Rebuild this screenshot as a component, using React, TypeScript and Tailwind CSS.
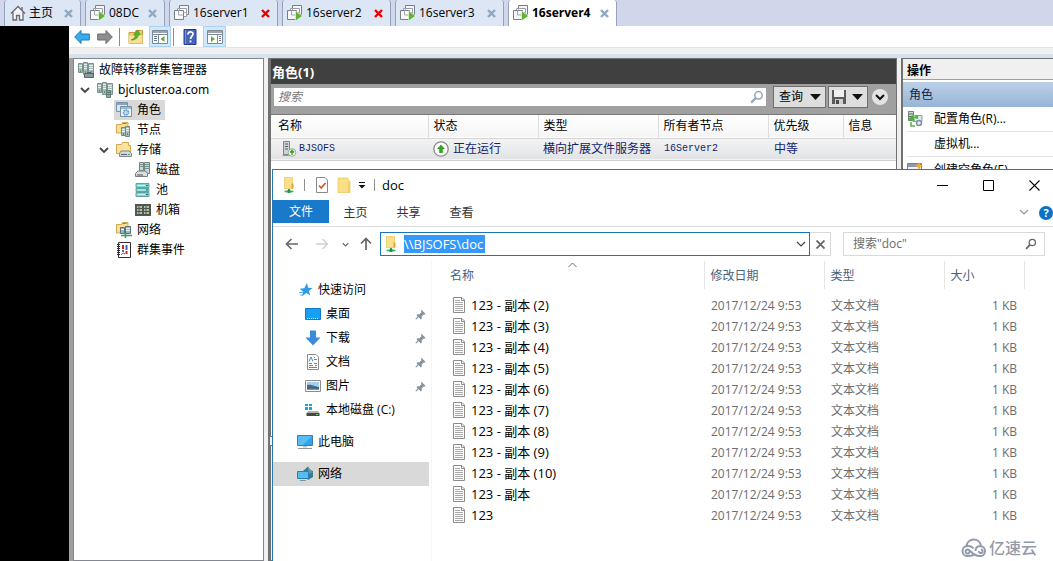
import type { ReactNode } from "react";
import { clsx } from "clsx";

type IconProps = { className?: string };

function Svg({ className = "size-4", children, box = 16 }: IconProps & { children: ReactNode; box?: number }) {
  return (
    <svg className={clsx("shrink-0", className)} viewBox={`0 0 ${box} ${box}`} fill="none" aria-hidden="true">
      {children}
    </svg>
  );
}

function HomeIcon() {
  return (
    <Svg>
      <path d="M1 8.500 8 1.500l7 7M3 7.500V15h3.500v-4.500h3V15H13V7.500" fill="#f8f8f8" stroke="#66686c" strokeWidth="1.300" />
      <path d="M12 2v3" stroke="#66686c" strokeWidth="1.300" />
    </Svg>
  );
}

function VmIcon({ running }: { running: boolean }) {
  return (
    <Svg>
      <path d="M5.500.500h9v9h-9z" fill="#f4f6fa" stroke="#7a7d84" />
      <path d="M3.500 3.500h9v8h-9z" fill="#fff" stroke="#9a9da4" />
      <path d="M.500 5.500h9v9h-9z" fill="#f7f9fc" stroke="#7a7d84" />
      <path d="M4.500 5.500v4.500h5M5.500 3.500v2M12.500 7.500h-3" stroke="#a6a9b0" />
      {running && <path d="M8.500 6v10l7-5z" fill="#5cb52f" stroke="#f4fff0" strokeWidth=".6" />}
    </Svg>
  );
}

function CloseIcon({ danger, className = "size-[9px]" }: { danger?: boolean; className?: string }) {
  return (
    <Svg className={className} box={9}>
      <path d="m1 1 7 7M8 1 1 8" stroke={danger ? "#e80000" : "#8fa7c1"} strokeWidth="2.400" />
    </Svg>
  );
}

function BigArrow({ back }: { back?: boolean }) {
  return (
    <Svg>
      {back ? (
        <path d="M.700 8 7 1.500v3.500h8.300v6H7v3.500z" fill="#3aaceb" stroke="#1679b8" />
      ) : (
        <path d="M15.300 8 9 1.500v3.500H.700v6H9v3.500z" fill="#8e8e8e" stroke="#6a6a6a" />
      )}
    </Svg>
  );
}

function FolderUpIcon() {
  return (
    <Svg>
      <path d="M1 3.500h6l1-2h6.500v13H1z" fill="#f0cd6b" stroke="#c59d3f" />
      <path d="M1 6.500h13.500v8H1z" fill="#f8df93" />
      <path d="M3 11c3-1 4-3 4.500-5L5.500 6 9.500 1l3 4.500-2 .300C10 9 7 11.500 3 11z" fill="#53b52c" stroke="#3b8a22" strokeWidth=".5" />
    </Svg>
  );
}

function PaneIcon({ right }: { right?: boolean }) {
  return (
    <Svg>
      <path d="M.500 1.500h15v13H.500z" fill="#fff" stroke="#7e8894" />
      <path d="M1 2h14v2H1z" fill="#9aa5b0" />
      <path d="M1 5.500h14" stroke="#7e8894" />
      <path d={right ? "M10.500 6v8" : "M6.500 6v8"} stroke="#7e8894" />
      <path d={right ? "M12 7.500h2M12 9.500h2M12 11.500h2" : "M2 7.500h3M2 9.500h3M2 11.500h3"} stroke="#597995" />
      <path d={right ? "M4 7v6l4-3z" : "M12.500 7v6l-4-3z"} fill="#5cac3e" />
    </Svg>
  );
}

function HelpBookIcon() {
  return (
    <Svg>
      <path d="M2 .500h12v15H2z" fill="#4565bc" stroke="#273f8b" />
      <path d="M3.500 1v14" stroke="#7b94dc" />
      <path d="M6 5.500C6 2 11 2 11 5c0 2-2.500 2.300-2.500 5" stroke="#fff" strokeWidth="1.700" />
      <path d="M7.600 11.500h1.800v1.800H7.600z" fill="#fff" />
    </Svg>
  );
}

function ClusterIcon({ manager }: { manager?: boolean }) {
  return (
    <Svg>
      <path d="M.500 1.500h4v9h-4zM5.500.500h4v12h-4zM10.500 1.500h5v11h-5z" fill="#a7bcb7" stroke="#7c9193" />
      <path d="M1 3.500h3M1 5.500h3M6 2.500h3M6 4.500h3M6 6.500h3M11 3.500h4M11 5.500h4M11 7.500h4" stroke="#e6f0ee" />
      <path d="M2.500 8v2M7.500 9v2M13.500 9v2" stroke="#56a24b" />
      {manager ? (
        <path d="M6.500 11.500h9v4h-9zM9 10.500h4" fill="#8b9ba3" stroke="#56646d" />
      ) : (
        <path d="M9.500 8.500h4v7h-4zM10 10.500h3M10 12.500h3" fill="#8fa9a4" stroke="#627d75" />
      )}
    </Svg>
  );
}

function RolesIcon() {
  return (
    <Svg>
      <path d="M.500.500h11v9H.500z" fill="#dae7f2" stroke="#7890a8" />
      <path d="M1 1h10v2H1z" fill="#8aa6c2" />
      <path d="M4.500 4.500h11v10h-11z" fill="#edf4fa" stroke="#7890a8" />
      <path d="M5 5h10v2H5z" fill="#9db8d1" />
      <circle cx="10" cy="10.500" r="2.500" fill="#bfd9ef" stroke="#5b91c2" strokeWidth="1.500" strokeDasharray="1.500 .7" />
    </Svg>
  );
}

function FolderWith({ children }: { children: ReactNode }) {
  return (
    <Svg>
      <path d="M.500 2.500h5l1-2h5.500v10.500H.500z" fill="#f9df91" stroke="#cfa951" />
      <path d="M6.500 1.500h4" stroke="#bb7634" />
      {children}
    </Svg>
  );
}

function NodesIcon() {
  return (
    <FolderWith>
      <path d="M5.500 5.500h4v8h-4zM9.500 4.500h4v10h-4z" fill="#a8bdb8" stroke="#728789" />
      <path d="M6 7.500h3M6 9.500h3M10 6.500h3M10 8.500h3" stroke="#edf5f3" />
      <path d="M7.500 11v2M11.500 11v2" stroke="#4d9d43" />
    </FolderWith>
  );
}

function StorageIcon() {
  return (
    <Svg>
      <path d="M.500 2.500h5l1-2h6v3h2v8H.500z" fill="#fae29a" stroke="#cfa951" />
      <path d="M5 9h8l2.500 2.500v3H3.500v-3z" fill="#d4d8da" stroke="#7f888e" />
      <path d="M5 12.500h6" stroke="#59636a" />
      <path d="M12 12.500h2" stroke="#4eb044" />
    </Svg>
  );
}

function DiskIcon() {
  return (
    <Svg>
      <path d="M4.500.500h4v8h-4zM9.500.500h5v11h-5z" fill="#c8d8d5" stroke="#748683" />
      <path d="M5 2.500h3M5 4.500h3M10 2.500h4M10 4.500h4M10 6.500h4" stroke="#74918b" />
      <path d="m3 9-2.500 2.500v3h12v-3L10.500 9z" fill="#dadddf" stroke="#787e83" />
      <path d="M2 13h6" stroke="#484e52" />
    </Svg>
  );
}

function PoolIcon() {
  return (
    <Svg>
      <path d="M1 1.500h13v4H1zM1 6.500h13v3H1zM1 10.500h13v4H1z" fill="#7fd3cf" stroke="#5fa5a8" />
      <path d="M2.500 3.500h8M2.500 8h8M2.500 12.500h8" stroke="#d1f4f0" />
      <path d="M11 3.500h2M11 8h2M11 12.500h2" stroke="#286e77" />
    </Svg>
  );
}

function ChassisIcon() {
  return (
    <Svg>
      <path d="M0 2h16v12H0z" fill="#4f584e" />
      <path d="M2 4h5v2H2zM9 4h5v2H9zM2 7h5v2H2zM9 7h5v2H9zM2 10h5v2H2zM9 10h5v2H9z" fill="#b4bba8" />
      <path d="M4 3v10M11 3v10" stroke="#4f584e" />
    </Svg>
  );
}

function NetworksIcon() {
  return (
    <FolderWith>
      <path d="M4.500 5.500h4v6h-4zM9.500 4.500h5v7h-5z" fill="#9cb5bd" stroke="#587481" />
      <path d="M5 7.500h3M10 6.500h4M10 8.500h4" stroke="#edf5f3" />
      <path d="M5 13.500h11M9.500 11v5" stroke="#20a56a" strokeWidth="1.500" />
    </FolderWith>
  );
}

function EventsIcon() {
  return (
    <Svg>
      <path d="M2.500.500h12v15h-12z" fill="#fff" stroke="#303030" />
      <path d="M1 2.500h3M1 4.500h3M1 6.500h3M1 8.500h3M1 10.500h3M1 12.500h3" stroke="#303030" />
      <path d="M6 3h2v4H6zM9.500 9h2v3h-2z" fill="#d8261f" />
      <path d="M9.500 3h2v5h-2zM6 8h2v2H6z" fill="#4a61c1" />
      <path d="M5 13l2-2 2 1" stroke="#9a46a0" />
    </Svg>
  );
}

function Chevron({ className, color = "#444", width = 1.5 }: IconProps & { color?: string; width?: number }) {
  return (
    <Svg className={className} box={10}>
      <path d="m1 3 4 4 4-4" stroke={color} strokeWidth={width} />
    </Svg>
  );
}

function Caret() {
  return (
    <Svg className="size-[11px]" box={11}>
      <path d="M0 3h11L5.500 9z" fill="#111" />
    </Svg>
  );
}

function Magnifier({ className, color }: { className?: string; color: string }) {
  return (
    <Svg className={className} box={14}>
      <circle cx="8.500" cy="5.300" r="3.700" stroke={color} strokeWidth="1.500" />
      <path d="m5.800 8-4.600 4.600" stroke={color} strokeWidth="2.200" />
    </Svg>
  );
}

function NetFolderIcon({ className }: IconProps) {
  return (
    <Svg className={className}>
      <path d="M3.500 0h8v11.500h-8z" fill="#fbe08a" stroke="#e4bb51" strokeWidth=".6" />
      <path d="M10.500 6.500h2v5h-2z" fill="#dca92e" />
      <path d="M8 12v2" stroke="#25a34a" strokeWidth="2" />
      <path d="M3.500 14.500h9" stroke="#35b558" strokeWidth="1.600" />
      <path d="M6.500 13h3v3h-3z" fill="#169944" />
    </Svg>
  );
}

function TextFileIcon() {
  return (
    <Svg>
      <path d="M2.500.500h8.500l2.500 2.500v12.500h-11z" fill="#fcfcfc" stroke="#8c8c8c" />
      <path d="M10.500.500v3h3" stroke="#8c8c8c" />
      <path d="M4 3.500h5M4 5.500h8M4 7.500h8M4 9.500h8M4 11.500h8M4 13.500h8" stroke="#a8a8a8" />
    </Svg>
  );
}

function PinIcon() {
  return (
    <Svg className="size-[11px]" box={11}>
      <path d="m6.200.500 4.300 4.300-1 .9-.8-.2-2 2 .1 2-1 .9L1.500 6.200l.9-1 2 .1 2-2-.200-.8z" fill="#8a949e" />
      <path d="M3.800 7.200.800 10.200" stroke="#8a949e" strokeWidth="1.200" />
    </Svg>
  );
}

const vmTabs = [
  { name: "08DC", width: "w-20", running: true },
  { name: "16server1", width: "w-[109px]", running: false, danger: true },
  { name: "16server2", width: "w-[109px]", running: true, danger: true },
  { name: "16server3", width: "w-[109px]", running: true },
  { name: "16server4", width: "w-[109px]", running: true, active: true },
];

function TabBar() {
  return (
    <nav className="flex h-[26px] shrink-0 gap-1 bg-[#d1d7ea] pl-1" aria-label="虚拟机">
      <div className="flex w-[77px] items-center gap-[3px] rounded-t-[3px] border-x border-[#94a3bd] bg-[#dce6f4] pr-[7px] pl-[5px]">
        <HomeIcon />
        <button className="flex-1 text-left">主页</button>
        <button aria-label="关闭 主页">
          <CloseIcon />
        </button>
      </div>
      {vmTabs.map((tab) => (
        <div
          key={tab.name}
          className={clsx(
            "flex items-center gap-[3px] rounded-t-[3px] border-x border-[#94a3bd] pr-[7px] pl-1",
            tab.width,
            tab.active ? "bg-white font-bold" : "bg-[#dce6f4]",
          )}
        >
          <VmIcon running={tab.running} />
          <button className="flex-1 text-left">{tab.name}</button>
          <button aria-label={`关闭 ${tab.name}`}>
            <CloseIcon danger={tab.danger} />
          </button>
        </div>
      ))}
    </nav>
  );
}

function Toolbar() {
  return (
    <div className="flex h-[21px] shrink-0 items-center bg-white pl-[5px]">
      <button aria-label="后退">
        <BigArrow back />
      </button>
      <button className="ml-[7px]" aria-label="前进">
        <BigArrow />
      </button>
      <span className="ml-[6px] h-[18px] w-px bg-[#8c8c8c]" />
      <button className="ml-2" aria-label="向上">
        <FolderUpIcon />
      </button>
      <button className="ml-[5px] flex h-[21px] w-[22px] items-center justify-center border border-[#a9d3f2] bg-[#d3e9fa]" aria-label="控制台树">
        <PaneIcon />
      </button>
      <span className="ml-[2px] h-[18px] w-px bg-[#8c8c8c]" />
      <button className="ml-2" aria-label="帮助">
        <HelpBookIcon />
      </button>
      <button className="ml-[5px] flex h-[21px] w-[23px] items-center justify-center border border-[#a9d3f2] bg-[#d3e9fa]" aria-label="操作窗格">
        <PaneIcon right />
      </button>
    </div>
  );
}

const treeIndent = ["pl-1", "pl-1", "pl-[23px]", "pl-[42px]"];

const tree = [
  { label: "故障转移群集管理器", level: 0, icon: <ClusterIcon manager /> },
  { label: "bjcluster.oa.com", level: 1, icon: <ClusterIcon />, open: true, latin: true },
  { label: "角色", level: 2, icon: <RolesIcon />, selected: true },
  { label: "节点", level: 2, icon: <NodesIcon /> },
  { label: "存储", level: 2, icon: <StorageIcon />, open: true },
  { label: "磁盘", level: 3, icon: <DiskIcon /> },
  { label: "池", level: 3, icon: <PoolIcon /> },
  { label: "机箱", level: 3, icon: <ChassisIcon /> },
  { label: "网络", level: 2, icon: <NetworksIcon /> },
  { label: "群集事件", level: 2, icon: <EventsIcon /> },
];

function ClusterTree() {
  return (
    <ul className="w-[191px] shrink-0 border border-[#828790] bg-white pt-px">
      {tree.map((item) => (
        <li key={item.label} className={clsx("flex h-5 items-center", treeIndent[item.level])}>
          {item.level > 0 && (
            <span className="flex w-[17px] pl-[2px]">{item.open && <Chevron className="size-[10px]" width={1.800} />}</span>
          )}
          <button
            className={clsx(
              "flex h-5 items-center gap-[5px] pr-1",
              item.level > 0 && "pl-[2px]",
              item.selected && "bg-[#d9d9d9]",
              item.latin && "font-['Noto_Sans'] text-xs",
            )}
          >
            {item.icon}
            {item.label}
          </button>
        </li>
      ))}
    </ul>
  );
}

const roleHeaders = [
  { label: "名称", width: "w-[157px]" },
  { label: "状态", width: "w-[110px]" },
  { label: "类型", width: "w-[120px]" },
  { label: "所有者节点", width: "w-[110px]" },
  { label: "优先级", width: "w-[75px]" },
  { label: "信息", width: "" },
];

function RolesPanel() {
  return (
    <main className="flex min-w-0 flex-1 flex-col gap-2 border-l-2 border-[#727272]">
      <section className="flex flex-[380] flex-col border border-[#727272] bg-white">
        <h1 className="flex h-[25px] shrink-0 items-center bg-[#404040] pl-px pt-px text-[13px] font-bold text-white">角色(1)</h1>
        <div className="flex h-[31px] shrink-0 items-center border-b border-[#777] bg-[#a0a0a0] pr-2 pb-[5px] pl-[3px]">
          <label className="flex h-[18px] min-w-0 flex-1 items-center bg-white pr-[2px] pl-1">
            <input
              className="min-w-0 flex-1 bg-transparent italic outline-none placeholder:text-[#777]"
              placeholder="搜索"
              aria-label="搜索角色"
            />
            <Magnifier className="size-[14px]" color="#93a5bb" />
          </label>
          <button className="ml-[7px] flex h-[22px] w-[53px] items-center justify-between border border-[#707070] bg-[#dedede] pr-1 pl-[5px]">
            查询
            <Caret />
          </button>
          <button className="ml-[2px] flex h-[22px] w-10 items-center justify-between border border-[#707070] bg-[#dedede] pr-1 pl-[3px]" aria-label="保存查询">
            <Svg className="size-[14px]" box={14}>
              <path d="M0 0h14v14H0z" fill="#5b5b5b" />
              <path d="M2 0h10v7H2z" fill="#efefef" />
              <path d="M3 9h8v5H3z" fill="#cfcfcf" />
              <path d="M4 10h3v4H4z" fill="#4b4b4b" />
            </Svg>
            <Caret />
          </button>
          <button className="ml-1 flex size-4 items-center justify-center rounded-full bg-[#e3e3e3]" aria-label="展开">
            <Chevron className="size-[10px]" color="#111" width={2} />
          </button>
        </div>
        <table className="w-full table-fixed border-collapse text-left">
          <thead>
            <tr className="h-[23px] border-b border-[#d5d5d5] bg-linear-to-b from-white to-[#f5f5f5]">
              {roleHeaders.map((header) => (
                <th key={header.label} className={clsx("border-r border-[#dedede] pl-[5px] font-normal last:border-r-0 first:pl-[7px]", header.width)}>
                  {header.label}
                </th>
              ))}
            </tr>
          </thead>
          <tbody>
            <tr className="h-[22px] border-b border-[#d0d0d0] bg-linear-to-b from-[#f4f4f5] to-[#e2e3e5] text-[#10246c]">
              <td className="pl-[10px]">
                <span className="flex items-center gap-[2px] font-['Liberation_Mono'] text-[10px]">
                  <Svg>
                    <path d="M2.500.500h6v13h-6z" fill="#ccd4d7" stroke="#7b878c" />
                    <path d="M4 3h3M4 5.500h3M4 8h3" stroke="#536068" />
                    <path d="M1.500 14.500h8" stroke="#8c979b" />
                    <circle cx="11" cy="11.500" r="3.800" fill="#f2f5f1" stroke="#a1aaa0" />
                    <path d="M11 9v5M9 11.500l2-2.300 2 2.300" stroke="#42a72f" strokeWidth="1.400" />
                  </Svg>
                  BJSOFS
                </span>
              </td>
              <td className="pl-[5px]">
                <span className="flex items-center gap-1 whitespace-nowrap">
                  <Svg>
                    <circle cx="8" cy="8" r="7.200" fill="#fff" stroke="#8a8a8a" strokeWidth="1.300" />
                    <path d="M8 3.500 12 8H9.800v4H6.200V8H4z" fill="#38a323" />
                  </Svg>
                  正在运行
                </span>
              </td>
              <td className="pl-[5px] whitespace-nowrap">横向扩展文件服务器</td>
              <td className="pl-[6px] font-['Liberation_Mono'] text-[10px]">16Server2</td>
              <td className="pl-[6px]">中等</td>
              <td />
            </tr>
          </tbody>
        </table>
      </section>
      <section className="flex-[115] border border-[#727272] bg-[#f0f0f0]" />
    </main>
  );
}

function ActionsPanel() {
  return (
    <aside className="w-[152px] shrink-0 border-t border-l-2 border-[#727272] bg-white">
      <h2 className="flex h-[21px] items-center border-b border-[#a0a0a0] bg-[#f0f0f0] pt-[3px] pl-1 font-bold">操作</h2>
      <h3 className="mt-[2px] flex h-[25px] items-center bg-linear-to-b from-[#bdd0e8] to-[#96b4d8] pl-[6px] text-[#15244c]">角色</h3>
      <ul className="pl-1">
        <li className="flex h-[25px] items-center gap-[11px] border-b border-[#e3e3e3]">
          <Svg>
            <path d="M1.500.500h5v9h-5z" fill="#cfd8d5" stroke="#718079" />
            <path d="M2 3h4M2 5.500h4" stroke="#5d6c65" />
            <path d="M6 4.500h9v6H6z" fill="#dbe8e3" stroke="#8aa79f" />
            <path d="M1 8l5-4 1 2 4-2v4l-4-1 1 3-5-1z" fill="#44b331" />
            <path d="M4 11v4h4" stroke="#5aad42" strokeWidth="1.500" />
            <circle cx="12" cy="12" r="2.500" fill="#e5edf2" stroke="#7b93a6" strokeWidth="1.500" />
          </Svg>
          <button>配置角色(R)...</button>
        </li>
        <li className="flex h-[25px] items-center border-b border-[#e3e3e3] pl-[27px]">
          <button>虚拟机...</button>
        </li>
        <li className="flex h-[25px] items-center gap-[11px]">
          <Svg>
            <path d="M.500 1.500h14v13H.500z" fill="#edf3fa" stroke="#738096" />
            <path d="M1 2h13v3H1z" fill="#8d98ac" />
            <path d="M3 7.500h9M3 9.500h9" stroke="#9daabd" />
            <path d="m12 0 1.200 2.500L16 4l-2.800 1.200L12 8l-1.200-2.800L8 4l2.800-1.500z" fill="#f5ab26" />
          </Svg>
          <button>创建空角色(E)...</button>
        </li>
      </ul>
    </aside>
  );
}

function TitleBar() {
  return (
    <header className="flex h-[30px] shrink-0 items-center pl-2">
      <NetFolderIcon className="size-4" />
      <span className="ml-[7px] h-3 w-px bg-[#909090]" />
      <button className="ml-[9px]" aria-label="属性">
        <Svg>
          <path d="M2.500.500h8.500l2.500 2.500v12.500h-11z" fill="#fff" stroke="#8a8a8a" />
          <path d="m5 8.500 2.300 2.500L11.500 6" stroke="#d9572a" strokeWidth="1.800" />
        </Svg>
      </button>
      <button className="ml-[6px]" aria-label="新建文件夹">
        <Svg>
          <path d="M2 1h10v3h2v11.500H2z" fill="#fbdf86" stroke="#ecc763" strokeWidth=".8" />
          <path d="M12 4h2v11h-2z" fill="#f4cf68" />
        </Svg>
      </button>
      <button className="ml-[6px]" aria-label="自定义快速访问工具栏">
        <Svg className="size-[8px]" box={8}>
          <path d="M1 1.500h6" stroke="#111" />
          <path d="M.500 4h7L4 7.500z" fill="#111" />
        </Svg>
      </button>
      <span className="ml-2 h-3 w-px bg-[#909090]" />
      <h2 className="ml-[7px] flex-1 text-[13px]">doc</h2>
      <div className="-mr-1 flex">
        <button className="flex w-[46px] justify-center" aria-label="最小化">
          <Svg className="size-[11px]" box={11}>
            <path d="M0 5.500h11" stroke="#000" />
          </Svg>
        </button>
        <button className="flex w-[46px] justify-center" aria-label="最大化">
          <Svg className="size-[11px]" box={11}>
            <path d="M.500.500h10v10H.500z" stroke="#000" />
          </Svg>
        </button>
        <button className="flex w-[46px] justify-center" aria-label="关闭">
          <Svg className="size-[11px]" box={11}>
            <path d="m.500.500 10 10M10.500.500l-10 10" stroke="#000" strokeWidth="1.100" />
          </Svg>
        </button>
      </div>
    </header>
  );
}

function Ribbon() {
  return (
    <div className="flex h-[27px] shrink-0 items-start border-b border-[#dadbdc] text-[#333]">
      <button className="h-[23px] w-14 bg-[#1979ca] text-white">文件</button>
      {["主页", "共享", "查看"].map((label) => (
        <button key={label} className="h-[25px] w-[53px]">
          {label}
        </button>
      ))}
      <button className="mt-[7px] ml-auto" aria-label="展开功能区">
        <Chevron className="size-[10px]" color="#999" width={1.200} />
      </button>
      <button className="mt-[6px] ml-[10px] flex size-[14px] items-center justify-center rounded-full bg-[#0a72c6] text-[11px] font-bold text-white" aria-label="帮助">
        ?
      </button>
    </div>
  );
}

function AddressBar() {
  return (
    <div className="flex h-[34px] shrink-0 items-center pr-2 pl-3">
      <button aria-label="后退">
        <Svg className="size-[14px]" box={14}>
          <path d="M13 7H2M6.500 2 1.500 7l5 5" stroke="#666" strokeWidth="1.600" />
        </Svg>
      </button>
      <button className="ml-4" aria-label="前进">
        <Svg className="size-[14px]" box={14}>
          <path d="M1 7h11M7.500 2l5 5-5 5" stroke="#cfcfcf" strokeWidth="1.400" />
        </Svg>
      </button>
      <button className="ml-[13px]" aria-label="最近位置">
        <Chevron className="size-[7px]" color="#666" width={1.800} />
      </button>
      <button className="ml-[10px]" aria-label="向上">
        <Svg className="size-[14px]" box={14}>
          <path d="M7 13V2M2 6.500l5-5 5 5" stroke="#666" strokeWidth="1.700" />
        </Svg>
      </button>
      <div className="ml-[7px] flex h-6 min-w-0 flex-1 items-center border border-[#1975b6] pr-[3px] pl-[2px]">
        <NetFolderIcon className="size-4" />
        <span className="ml-[5px] bg-[#3399ff] pr-[2px] text-[13px] leading-[18px] text-white">\\BJSOFS\doc</span>
        <button className="ml-auto" aria-label="历史记录">
          <Chevron className="size-[10px]" color="#444" width={1.200} />
        </button>
      </div>
      <button className="flex h-6 w-[21px] items-center justify-center border border-l-0 border-[#d9d9d9]" aria-label="停止">
        <Svg className="size-[9px]" box={9}>
          <path d="m.500.500 8 8M8.500.500l-8 8" stroke="#666" strokeWidth="1.800" />
        </Svg>
      </button>
      <label className="ml-3 flex h-6 w-[202px] items-center border border-[#d9d9d9] pr-[7px] pl-[9px]">
        <input className="min-w-0 flex-1 outline-none placeholder:text-[#6d6d6d]" placeholder={'搜索"doc"'} aria-label="搜索" />
        <Magnifier className="size-3" color="#666" />
      </label>
    </div>
  );
}

const places = [
  {
    label: "桌面",
    pinned: true,
    icon: (
      <Svg>
        <path d="M.500 2.500h15v11H.500z" fill="#16a0f5" stroke="#1179c9" />
        <path d="M2 12.500h12" stroke="#d8f0ff" strokeDasharray="1 1" />
      </Svg>
    ),
  },
  {
    label: "下载",
    pinned: true,
    icon: (
      <Svg>
        <path d="M5 .500h6v7h4.500L8 15.500.500 7.500H5z" fill="#3b8bdc" />
      </Svg>
    ),
  },
  {
    label: "文档",
    pinned: true,
    icon: (
      <Svg>
        <path d="M2.500.500h8.500l2.500 2.500v12.500h-11z" fill="#fff" stroke="#8c8c8c" />
        <path d="M4 7.500 6 3l2 4.500M9 3.500h1M9 5.500h3M4 9.500h3M9 9.500h3M4 11.500h4M10 11.500h2M4 13.500h8" stroke="#4090ce" />
      </Svg>
    ),
  },
  {
    label: "图片",
    pinned: true,
    icon: (
      <Svg>
        <path d="M.500 2.500h15v11H.500z" fill="#fff" stroke="#8c8c8c" />
        <path d="M2 4h12v8H2z" fill="#a3cff0" />
        <path d="M2 7c4-1 6 1 12 2v3H2z" fill="#446a87" />
        <path d="M2 11h12v1H2z" fill="#6c9fc2" />
      </Svg>
    ),
  },
  {
    label: "本地磁盘 (C:)",
    pinned: false,
    icon: (
      <Svg>
        <path d="M0 2h3v2H0zM4 2h3v2H4zM0 5h3v3H0zM4 5h3v3H4z" fill="#12a9d5" />
        <path d="M3 9h10l1.500 2H1.500z" fill="#b3b3b3" />
        <path d="M1.500 11h13v3h-13z" fill="#484848" />
        <path d="M11 12.500h2" stroke="#58d957" />
      </Svg>
    ),
  },
];

function NavigationPane() {
  return (
    <nav className="flex w-[156px] shrink-0 flex-col pt-[17px]" aria-label="导航窗格">
      <a href="#quick" className="flex h-6 items-center gap-[5px] pl-6">
        <Svg>
          <path d="m10 1 1.200 4.800 4.300.200-3.600 3 1.300 4.500L9.300 11l-4.400 3.500 1.300-4.800-3.500-3 4.600-.500z" fill="#329be5" />
          <path d="M2 10.500h4M3 13h3" stroke="#67b7ee" />
        </Svg>
        快速访问
      </a>
      {places.map((place) => (
        <a key={place.label} href={`#${place.label}`} className="flex h-6 items-center gap-[5px] pr-[3px] pl-8">
          {place.icon}
          <span className="flex-1">{place.label}</span>
          {place.pinned && <PinIcon />}
        </a>
      ))}
      <a href="#computer" className="mt-2 flex h-6 items-center gap-[5px] pl-6">
        <Svg>
          <path d="M.500 1.500h15v10H.500z" fill="#57bdf4" stroke="#3d7da8" />
          <path d="M15 2v9H6z" fill="#2fa4e8" />
          <path d="M6 12h4v1.500H6z" fill="#b5c2cb" />
          <path d="M1 14.500h14" stroke="#8a97a0" />
        </Svg>
        此电脑
      </a>
      <a href="#network" className="mt-2 flex h-6 items-center gap-[5px] bg-[#d9d9d9] pl-6">
        <Svg>
          <path d="m6 5 5-4.500v3L16 5v6l-5 3z" fill="#367c93" />
          <path d="m11 .500 5 6-5 2z" fill="#5a98a8" />
          <path d="M.500 5.500h11v7H.500z" fill="#54bdf2" stroke="#2a7faf" />
          <path d="M3 14.500h6" stroke="#7b98a8" />
        </Svg>
        网络
      </a>
    </nav>
  );
}

const files = [
  "123 - 副本 (2)",
  "123 - 副本 (3)",
  "123 - 副本 (4)",
  "123 - 副本 (5)",
  "123 - 副本 (6)",
  "123 - 副本 (7)",
  "123 - 副本 (8)",
  "123 - 副本 (9)",
  "123 - 副本 (10)",
  "123 - 副本",
  "123",
];

function FileList() {
  const head = "border-r border-[#e5e5e5] pt-[2px] pl-[6px] font-normal";
  return (
    <div className="ml-[2px] min-w-0 flex-1 border-l border-[#f5f5f5]">
      <table className="w-full table-fixed border-collapse text-left">
        <thead>
          <tr className="h-7 text-[#4c607a]">
            <th className="relative border-r border-[#e5e5e5] pt-[2px] pl-[18px] font-normal">
              名称
              <Svg className="absolute top-0 left-1/2 size-[9px]" box={9}>
                <path d="m.500 6 4-4 4 4" stroke="#666" />
              </Svg>
            </th>
            <th className={clsx(head, "w-[120px]")}>修改日期</th>
            <th className={clsx(head, "w-[120px]")}>类型</th>
            <th className={clsx(head, "w-20")}>大小</th>
            <th className="w-[29px]" />
          </tr>
        </thead>
        <tbody>
          <tr className="h-[5px]" aria-hidden="true" />
          {files.map((name) => (
            <tr key={name} className="h-[21px] text-[#6d6d6d]">
              <td className="pl-[19px]">
                <span className="flex items-center gap-1 text-[13px] text-black">
                  <TextFileIcon />
                  {name}
                </span>
              </td>
              <td className="pt-[2px] pl-[7px] whitespace-nowrap">2017/12/24 9:53</td>
              <td className="pt-[2px] pl-[7px]">文本文档</td>
              <td className="pt-[2px] pr-[7px] text-right">1 KB</td>
              <td />
            </tr>
          ))}
        </tbody>
      </table>
    </div>
  );
}

function ExplorerWindow() {
  return (
    <section className="absolute top-[169px] right-0 bottom-0 left-[272px] flex flex-col overflow-hidden border-t border-l border-[#2878b4] bg-white">
      <TitleBar />
      <Ribbon />
      <AddressBar />
      <div className="flex min-h-0 flex-1">
        <NavigationPane />
        <FileList />
      </div>
    </section>
  );
}

function Watermark() {
  return (
    <div className="absolute right-4 bottom-[1px] flex items-center gap-[2px] text-base font-medium text-[#929aaa]">
      <svg className="h-5 w-[26px]" viewBox="0 0 26 20" fill="none" stroke="currentColor" strokeWidth="2" aria-hidden="true">
        <path d="M5.500 8C6.500-.500 18.500-.500 20 7.500" />
        <path d="M8.500 13a2 2 0 1 1-2-1.500c3.500 0 5 6.500 12 6.500a5 5 0 0 0 1-10c-3 0-5 2-5 5" />
        <path d="M18 13a1.800 1.800 0 1 0 2-1.500M14 16c-1.500 1.300-4 2-7 2A5 5 0 0 1 6 8c2.500-.3 5 .5 6.500 2.500" />
      </svg>
      亿速云
    </div>
  );
}

export default function App() {
  return (
    <div className="relative flex min-h-screen flex-col overflow-hidden bg-black font-['Open_Sans','Noto_Sans_CJK_SC',sans-serif] text-xs leading-4 text-black">
      <TabBar />
      <div className="flex flex-1">
        <div className="w-[69px] shrink-0" />
        <div className="flex min-w-0 flex-1 flex-col bg-[#f0f0f0]">
          <Toolbar />
          <div className="h-[7px] shrink-0 border-t border-[#e8e4e1]" />
          <div className="flex flex-1 gap-1 border-t-4 border-[#d7e1ec]">
            <div className="-mr-1 w-1 shrink-0 bg-[#a0a0a0]" />
            <ClusterTree />
            <RolesPanel />
            <ActionsPanel />
          </div>
        </div>
      </div>
      <ExplorerWindow />
      <Watermark />
    </div>
  );
}
